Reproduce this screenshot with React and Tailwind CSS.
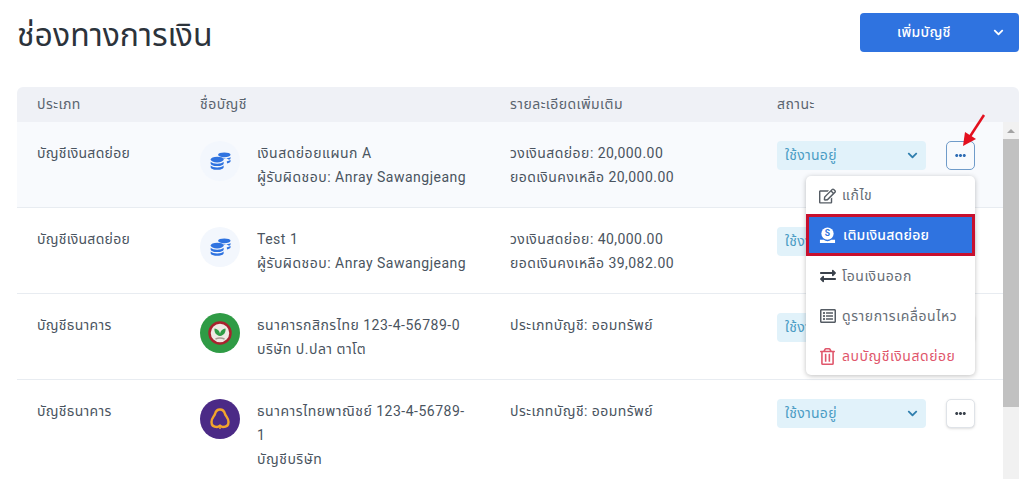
import { FaChevronDown, FaEllipsisH, FaRegEdit, FaExchangeAlt, FaRegListAlt, FaRegTrashAlt } from 'react-icons/fa';

const font = "font-['Roboto','Noto_Sans','Noto_Sans_Thai',sans-serif]";

function Coins() {
  return (
    <div className="w-10 h-10 rounded-full bg-[#f3f7fd] flex items-center justify-center">
      <svg width="21" height="20" viewBox="0 0 22 20" fill="#2f73e0">
        <ellipse cx="15" cy="3.500" rx="6.500" ry="2.500" />
        <path d="M8.500 5.700c1.300 1 3.700 1.600 6.500 1.600s5.200-.6 6.500-1.600V7c0 .7-.6 1.300-1.600 1.800-1.500-1.300-4-2-6.900-2.200-1.800-.1-3.300-.4-4.500-.9z" />
        <path d="M17.500 10.500c1.700-.3 3.200-.9 4-1.700V10.500c0 .8-1.500 1.600-3.500 2z" />
        <ellipse cx="7.500" cy="8.500" rx="6.800" ry="3" />
        <path d="M.7 10.800c1.200 1.200 3.800 2 6.800 2s5.600-.8 6.800-2v1.700c0 1.500-3 2.700-6.800 2.700S.7 14 .7 12.500z" />
        <path d="M.7 14.800c1.200 1.200 3.800 2 6.800 2s5.600-.8 6.800-2v1.700c0 1.500-3 2.700-6.800 2.700S.7 18 .7 16.500z" />
      </svg>
    </div>
  );
}

function KBank() {
  return (
    <div className="w-10 h-10 rounded-full bg-[#2f9b45] flex items-center justify-center">
      <svg width="24" height="24" viewBox="0 0 24 24">
        <circle cx="12" cy="12" r="10.500" fill="#efe9e4" stroke="#a8222e" strokeWidth="2.500" />
        <path d="M12 15C8 14.500 6 11 6.500 7.500 10 8 12.500 10.500 12 15z" fill="#2f9b45" />
        <path d="M12 15c4-.5 6-4 5.500-7.500C14 8 11.500 10.500 12 15z" fill="#2f9b45" />
        <path d="M7.500 18c3-1.200 6-1.200 9 0" stroke="#a89c94" strokeWidth="1.500" fill="none" />
      </svg>
    </div>
  );
}

function Scb() {
  return (
    <div className="w-10 h-10 rounded-full bg-[#4b2a86] flex items-center justify-center">
      <svg width="24" height="26" viewBox="0 0 24 26" fill="none" stroke="#f2a52c" strokeWidth="2.400" strokeLinejoin="round">
        <path d="M12 3.500C9 3.500 7.500 6 7 8c-1 2.500-3.500 4-3.500 8 0 3.500 2.500 5 5.500 5 1 0 2-.5 3-1.500 1 1 2 1.500 3 1.500 3 0 5.500-1.500 5.500-5 0-4-2.500-5.500-3.500-8-.5-2-2-4.500-5-4.500z" />
        <path d="M12 19.500V23" strokeWidth="1.500" />
      </svg>
    </div>
  );
}

const rows = [
  {
    type: 'บัญชีเงินสดย่อย', icon: <Coins />, lines: ['เงินสดย่อยแผนก A', 'ผู้รับผิดชอบ: Anray Sawangjeang'],
    details: ['วงเงินสดย่อย: 20,000.00', 'ยอดเงินคงเหลือ 20,000.00'], active: true, h: 'h-[86px]',
  },
  {
    type: 'บัญชีเงินสดย่อย', icon: <Coins />, lines: ['Test 1', 'ผู้รับผิดชอบ: Anray Sawangjeang'],
    details: ['วงเงินสดย่อย: 40,000.00', 'ยอดเงินคงเหลือ 39,082.00'], h: 'h-[86px]',
  },
  {
    type: 'บัญชีธนาคาร', icon: <KBank />, lines: ['ธนาคารกสิกรไทย 123-4-56789-0', 'บริษัท ป.ปลา ตาโต'],
    details: ['ประเภทบัญชี: ออมทรัพย์'], h: 'h-[86px]',
  },
  {
    type: 'บัญชีธนาคาร', icon: <Scb />, lines: ['ธนาคารไทยพาณิชย์ 123-4-56789-', '1', 'บัญชีบริษัท'],
    details: ['ประเภทบัญชี: ออมทรัพย์'], h: 'h-[99px]',
  },
];

function Row({ row }) {
  return (
    <div className={`${row.h} ${row.active ? 'bg-[#f8fafd]' : 'bg-white'} grid grid-cols-[163px_310px_267px_1fr] pl-5 pt-[19px] border-b border-[#e8ecf1] last:border-b-0 text-[14px] tracking-[0.3px] text-[#4a5460]`}>
      <div className="leading-[24px]">{row.type}</div>
      <div className="flex">
        <div className="mr-[17px]">{row.icon}</div>
        <div className="w-[250px] leading-[24px] whitespace-nowrap tracking-[0.5px]">
          {row.lines.map((l) => <div key={l}>{l}</div>)}
        </div>
      </div>
      <div className="leading-[24px] tracking-[0.45px]">
        {row.details.map((l) => <div key={l}>{l}</div>)}
      </div>
      <div className="flex">
        <div className="w-[149px] h-[29px] rounded bg-[#e1f2fa] text-[#4b9cc4] flex items-center justify-between pl-2 pr-[8px]">
          <span>ใช้งานอยู่</span>
          <FaChevronDown size={11} className="text-[#2f7fae]" />
        </div>
        <div className={`ml-5 w-[29px] h-[29px] rounded-[5px] flex items-center justify-center ${row.active ? 'bg-[#f8fafd] border-[1.5px] border-[#6f9bc9] text-[#2f6db5]' : 'bg-white border border-[#dfe3e8] shadow-sm text-[#3a424c]'}`}>
          <FaEllipsisH size={11} />
        </div>
      </div>
    </div>
  );
}

function MenuItem({ icon, label, className }) {
  return (
    <div className={`h-10 flex items-center gap-[6px] pl-[13px] text-[14px] tracking-[0.55px] ${className}`}>
      <span className="w-[17px] flex justify-center">{icon}</span>
      <span>{label}</span>
    </div>
  );
}

export default function App() {
  return (
    <div className={`${font} relative w-[1024px] h-[479px] overflow-hidden bg-white pl-[17px] pr-[5px]`}>
      <div className="flex justify-between items-start pt-[13px] h-[87px]">
        <h1 className="text-[32px] leading-[44px] text-[#2c333b]">ช่องทางการเงิน</h1>
        <button className="w-[159px] h-[39px] rounded bg-[#2f73e0] text-white text-[14px] tracking-[0.3px] font-medium flex items-center justify-between pl-[37px] pr-[15px]">
          <span>เพิ่มบัญชี</span>
          <FaChevronDown size={11} />
        </button>
      </div>

      <div className="h-[35px] rounded-t-md bg-[#eff1f6] grid grid-cols-[163px_310px_267px_1fr] pl-5 items-center text-[14px] tracking-[0.45px] text-[#5a646f]">
        <div>ประเภท</div>
        <div>ชื่อบัญชี</div>
        <div>รายละเอียดเพิ่มเติม</div>
        <div>สถานะ</div>
      </div>

      <div className="flex">
        <div className="flex-1 min-w-0">
          {rows.map((r) => <Row key={r.lines[0]} row={r} />)}
        </div>
        <div className="w-4 bg-[#f1f1f1] flex flex-col items-center">
          <div className="h-[17px] flex items-center justify-center">
            <div className="w-0 h-0 border-l-[4px] border-r-[4px] border-b-[4px] border-l-transparent border-r-transparent border-b-[#a3a3a3]" />
          </div>
          <div className="w-full h-[268px] bg-[#c1c1c1]" />
        </div>
      </div>

      <div className="absolute left-[806px] top-[176px] w-[169px] h-[199px] bg-white rounded-[5px] shadow-[0_1px_5px_rgba(0,0,0,0.25)] pt-px">
        <MenuItem className="text-[#666d76] h-[37px]" icon={<FaRegEdit size={18} className="text-[#555c64]" />} label="แก้ไข" />
        <div className="h-[42px] bg-[#2f73e0] border-[3px] border-[#c8102e] text-white text-[14px] tracking-[0.2px] font-medium flex items-center gap-[7px] pl-[10px]">
          <svg width="17" height="17" viewBox="0 0 18 18" fill="white">
            <circle cx="9" cy="7" r="6.500" />
            <path d="M1 13.500h4c1.200 1 2.500 1.500 4 1.500s2.800-.5 4-1.500h4V17H1z" />
            <text x="9" y="10" textAnchor="middle" fontSize="9" fontWeight="700" fill="#2f73e0">S</text>
          </svg>
          <span>เติมเงินสดย่อย</span>
        </div>
        <MenuItem className="text-[#666d76]" icon={<FaExchangeAlt size={16} className="text-[#3a424c]" />} label="โอนเงินออก" />
        <MenuItem className="text-[#666d76]" icon={<FaRegListAlt size={16} className="text-[#555c64]" />} label="ดูรายการเคลื่อนไหว" />
        <MenuItem className="text-[#e0566b]" icon={<FaRegTrashAlt size={17} />} label="ลบบัญชีเงินสดย่อย" />
      </div>

      <svg className="absolute left-[958px] top-[112px]" width="30" height="36" viewBox="0 0 30 36">
        <path d="M26 3 L11 26" stroke="#e3101e" strokeWidth="2.500" />
        <path d="M5 34 L7 20 L18 27 Z" fill="#e3101e" />
      </svg>
    </div>
  );
}
